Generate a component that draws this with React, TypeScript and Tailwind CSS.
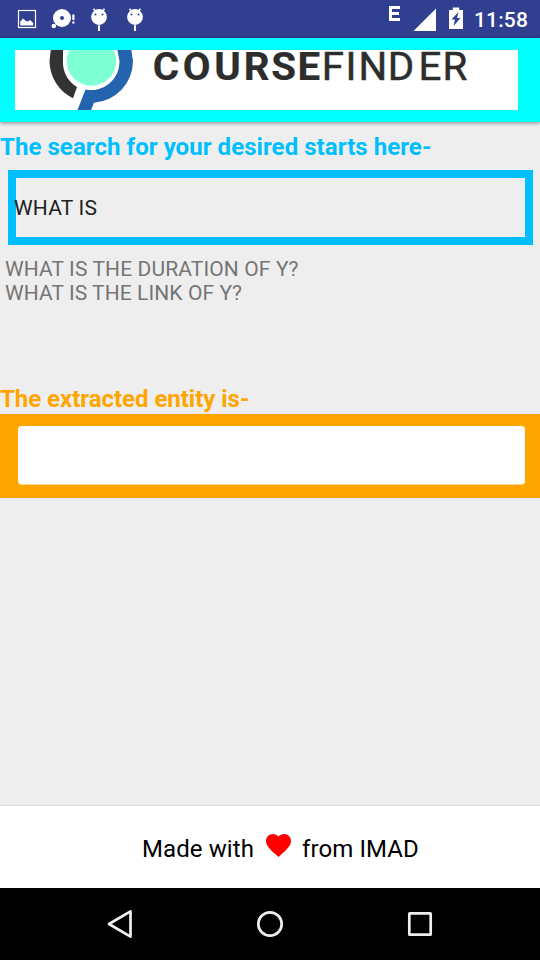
const Droid = () => (
  <svg width="18" height="24" viewBox="0 0 18 24" fill="#fff">
    <path d="M3.500 1.800l3 3.700M14.500 1.800l-3 3.700" stroke="#fff" strokeWidth="1.600" />
    <path d="M9 18.300V24" stroke="#fff" strokeWidth="2.100" />
    <circle cx="9" cy="10" r="7.900" />
    <circle cx="5.500" cy="7.500" r="1" fill="#303f8f" />
    <circle cx="12.500" cy="7.500" r="1" fill="#303f8f" />
  </svg>
);

function StatusBar() {
  return (
    <div className="flex h-[38px] shrink-0 items-start justify-between bg-[#303f8f] text-white">
      <svg width="160" height="38" viewBox="0 0 160 38" fill="#fff">
        <rect x="18.500" y="10.500" width="17" height="17" fill="none" stroke="#fff" strokeWidth="1.200" />
        <path d="M20.300 25.500v-4l2.700-3 3 2.500 2 .5 2-1.500 3.200 3v2.500z" />
        <circle cx="62" cy="18" r="9" />
        <circle cx="62" cy="18" r="2" fill="#303f8f" />
        <circle cx="53.800" cy="26" r="2.300" />
        <path d="M72.300 14.500h2.200v5.500h-2.200zM72.300 21.500h2.200v2h-2.200z" />
        <g transform="translate(90 7)"><Droid /></g>
        <g transform="translate(126 7)"><Droid /></g>
      </svg>
      <div className="flex">
        <svg width="85" height="38" viewBox="385 0 85 38" fill="#fff">
          <path d="M389 6h11v3h-8v3h7v3h-7v3h8v3h-11z" />
          <path d="M413.500 31L436 8.500V31z" />
          <path d="M449 10h3.800V7.500h6.400V10h3.800v19h-14z" />
          <path d="M458.500 12l-7 7.500h3.500l-1.500 6.500 7-8h-3.500z" fill="#303f8f" />
        </svg>
        <span className="mr-3 w-[58px] whitespace-nowrap pl-1 text-[21px] font-medium leading-[40px] tracking-[0.150px]">11:58</span>
      </div>
    </div>
  );
}

function Header() {
  return (
    <header className="z-10 h-[84px] shrink-0 bg-[#00ffff] pl-[15px] pt-3 shadow-[0_1px_4px_rgba(0,0,0,0.45)]">
      <svg className="block overflow-visible bg-white" width="503" height="60" viewBox="15 50 503 60">
        <svg x="15" y="50" width="130" height="60" viewBox="15 50 130 60">
          <circle cx="91.500" cy="61" r="24.700" fill="#7fffd4" />
          <path d="M49.500 61a42 42 0 0 0 23.500 37.300l4-11.300A28.500 28.500 0 0 1 63 61V48H51z" fill="#333" />
          <path d="M133 61a41.700 41.700 0 0 1-39 41.700L91 110H77.500L85.500 89.500A28.300 28.300 0 0 0 119.500 61L117 48h14z" fill="#2464ae" />
        </svg>
        <g fill="#2d2d2d" stroke="#2d2d2d" fontFamily="Roboto, sans-serif" fontSize="38" transform="scale(1.06 1)">
          <text x="144.200 172.400 202.200 229.900 255.900 280.700" y="80.300" fontWeight="700" strokeWidth="0.200">COURSE</text>
          <text x="303.500 326 338.300 365.700 394.900 417.500" y="80.300" strokeWidth="0.500">FINDER</text>
        </g>
      </svg>
    </header>
  );
}

export default function App() {
  return (
    <div className="flex h-[960px] w-[540px] flex-col overflow-hidden bg-[#eeeeee] font-[Roboto,sans-serif]">
      <StatusBar />
      <Header />
      <main className="flex flex-1 flex-col">
        <h1 className="mt-[11px] h-[37px] whitespace-nowrap text-2xl font-bold leading-7 tracking-[0.060px] text-[#00bfff]">
          The search for your desired starts here-
        </h1>
        <div className="ml-2 mr-[7px] flex h-[75px] items-center border-8 border-[#00bfff] text-[21px] tracking-[0.200px] text-[#212121]">
          <span className="-ml-[2px] mt-[2px]">WHAT IS</span>
        </div>
        <div className="mt-3 h-[128px] pl-[5px] text-[21px] leading-6 tracking-[0.120px] text-[#757575]">
          <p>WHAT IS THE DURATION OF Y?</p>
          <p className="tracking-[0.080px]">WHAT IS THE LINK OF Y?</p>
        </div>
        <h2 className="h-[29px] whitespace-nowrap text-2xl font-bold leading-7 tracking-[-0.030px] text-[#ffa500]">The extracted entity is-</h2>
        <div className="h-[84px] bg-[#ffa500] pl-[18px] pr-[15px] pt-3 shadow-[0_0_1px_rgba(0,0,0,0.2)]">
          <div className="h-[58px] rounded bg-white shadow-[0_1px_0_#ffd58a]" />
        </div>
      </main>
      <footer className="flex h-[83px] shrink-0 items-start border-t border-[#dcdcdc] bg-white pl-[142px] pt-[29px] text-2xl leading-7 tracking-[0.100px] text-black">
        <span className="w-[124px] whitespace-nowrap">Made with</span>
        <svg className="-mt-px" width="25" height="23" viewBox="2 3 20 18.350" preserveAspectRatio="none" fill="#f00">
          <path d="M12 21.350l-1.450-1.320C5.400 15.360 2 12.280 2 8.500 2 5.420 4.420 3 7.500 3c1.740 0 3.410.810 4.500 2.090C13.090 3.810 14.760 3 16.500 3 19.580 3 22 5.420 22 8.500c0 3.780-3.400 6.860-8.550 11.540z" />
        </svg>
        <span className="ml-[11px] whitespace-nowrap">from IMAD</span>
      </footer>
      <nav className="h-[72px] shrink-0 bg-black">
        <svg width="540" height="72" viewBox="0 888 540 72" fill="none" stroke="#eee" strokeWidth="2.700" strokeLinejoin="round">
          <path d="M109 924l21.500-12.700v25.400z" />
          <circle cx="270" cy="924" r="11.700" />
          <rect x="409.300" y="913.300" width="21.400" height="21.400" rx=".5" />
        </svg>
      </nav>
    </div>
  );
}
